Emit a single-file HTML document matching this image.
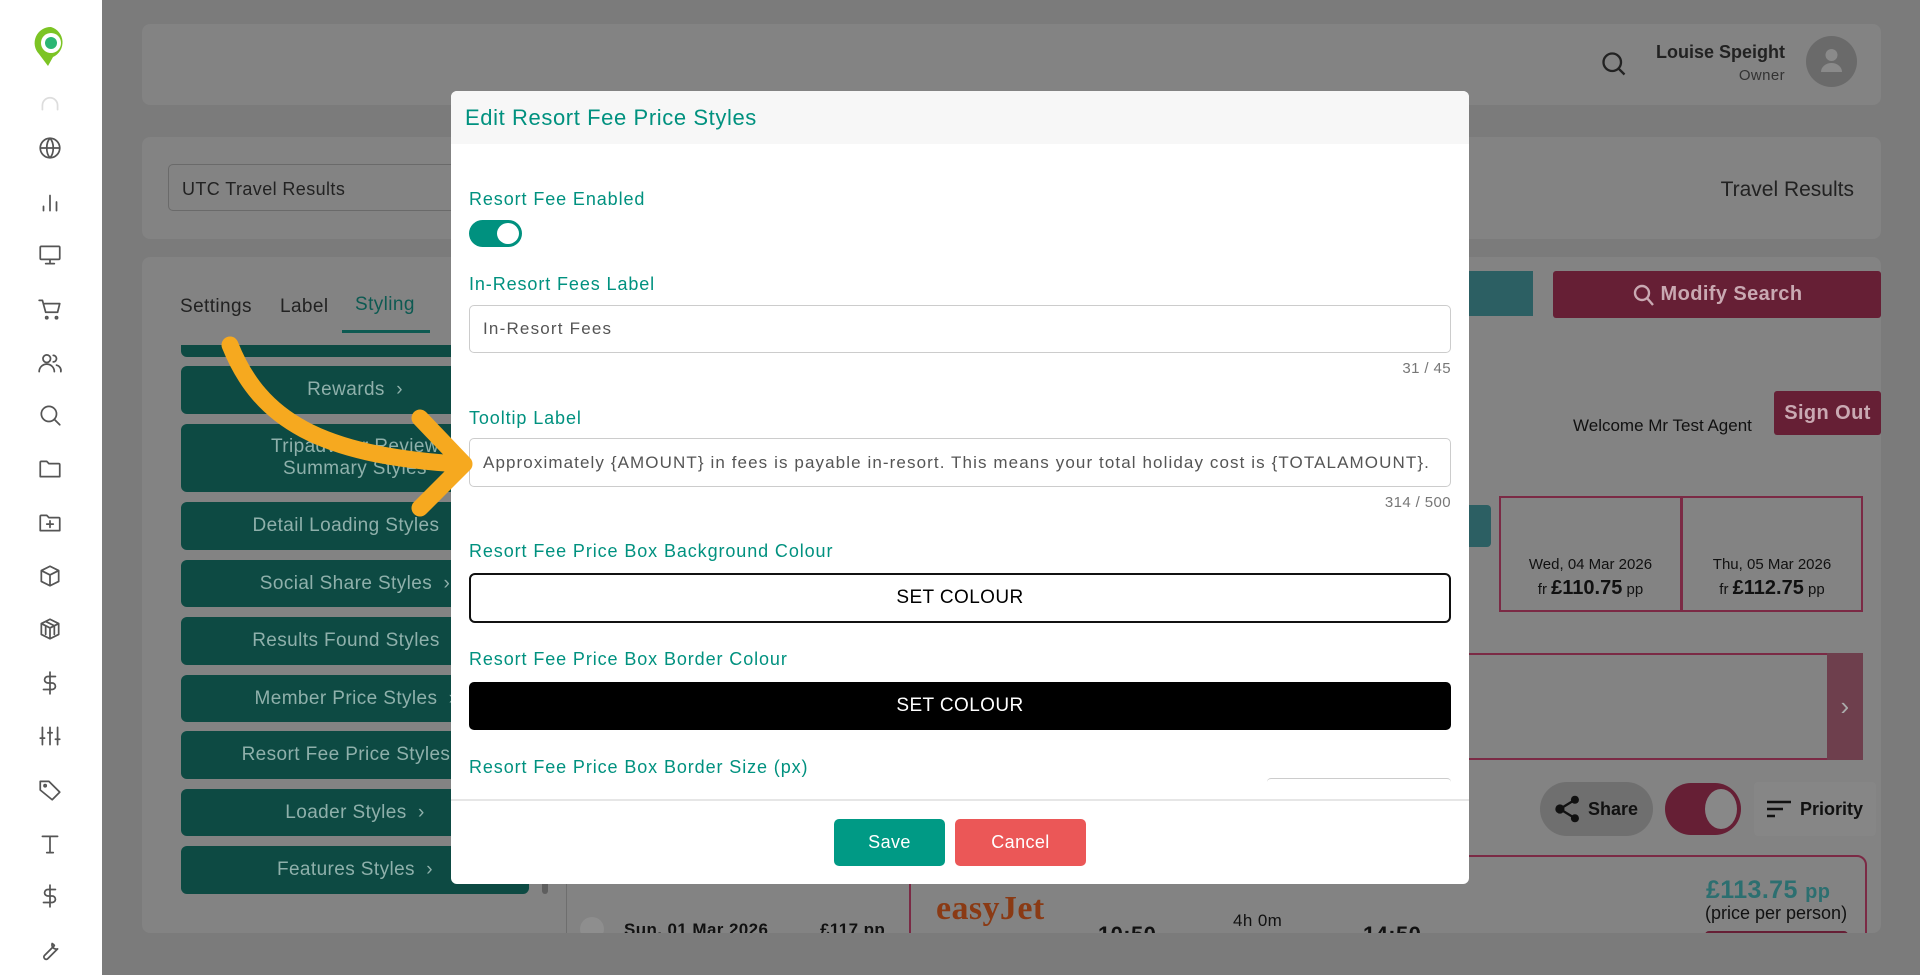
<!DOCTYPE html>
<html><head><meta charset="utf-8"><style>
*{box-sizing:border-box;margin:0;padding:0}
body{width:1920px;height:975px;overflow:hidden;background:#7b7b7b;font-family:"Liberation Sans",sans-serif;position:relative;letter-spacing:0.4px}
.a{position:absolute}
.side{left:0;top:0;width:102px;height:975px;background:#fff}
.card{background:#838383;border-radius:8px}
.tb{position:absolute;left:181px;width:348px;background:#0d4a43;border-radius:6px;color:#8fb0ab;font-size:19px;text-align:center;display:flex;align-items:center;justify-content:center;line-height:22px}
.lbl{position:absolute;left:469px;color:#00917f;font-size:18px;letter-spacing:0.9px}
.inp{position:absolute;left:469px;width:982px;border:1.5px solid #ccc;border-radius:5px;background:#fff;color:#555;font-size:17px;padding-left:13px;display:flex;align-items:center;white-space:nowrap;overflow:hidden;letter-spacing:1.2px}
.cnt{position:absolute;right:469px;color:#777;font-size:15px}
svg.i{position:absolute;left:37px;width:26px;height:26px;fill:none;stroke:#555;stroke-width:1.6;stroke-linecap:round;stroke-linejoin:round}
</style></head><body>
<div class="a side"></div>
<svg class="a" style="left:31px;top:24px" width="40" height="46" viewBox="0 0 40 46"><path d="M20 3a16 16 0 0 0-12 27l9 12 5-9a16 16 0 0 0-2-30z" fill="#7cc424"/><circle cx="20" cy="19" r="10" fill="#fff"/><circle cx="20" cy="19" r="6" fill="#2bb673"/></svg>
<svg class="i" style="top:88px;stroke:#ddd" viewBox="0 0 24 24"><path d="M5 20v-4a7 7 0 0 1 14 0v4"/></svg>
<svg class="i" style="top:135px" viewBox="0 0 24 24"><circle cx="12" cy="12" r="9"/><path d="M3 12h18M12 3c4 4 4 14 0 18M12 3c-4 4-4 14 0 18"/></svg>
<svg class="i" style="top:189px" viewBox="0 0 24 24"><path d="M6 20v-4M12 20V6M18 20v-8"/></svg>
<svg class="i" style="top:242px" viewBox="0 0 24 24"><rect x="3" y="4" width="18" height="12" rx="1"/><path d="M12 16v4M8 20h8"/></svg>
<svg class="i" style="top:296px" viewBox="0 0 24 24"><path d="M2 4h3l3 11h11l2-8H7"/><circle cx="9" cy="20" r="1"/><circle cx="18" cy="20" r="1"/></svg>
<svg class="i" style="top:350px" viewBox="0 0 24 24"><circle cx="9" cy="8" r="3.5"/><path d="M2 20a7 7 0 0 1 14 0M15 5a3 3 0 0 1 0 6M18 14a5 5 0 0 1 4 6"/></svg>
<svg class="i" style="top:402px" viewBox="0 0 24 24"><circle cx="11" cy="11" r="7"/><path d="M16 16l5 5"/></svg>
<svg class="i" style="top:456px" viewBox="0 0 24 24"><path d="M3 6a1 1 0 0 1 1-1h5l2 2h9a1 1 0 0 1 1 1v11H3z"/></svg>
<svg class="i" style="top:510px" viewBox="0 0 24 24"><path d="M3 6a1 1 0 0 1 1-1h5l2 2h9a1 1 0 0 1 1 1v11H3z"/><path d="M12 10v6M9 13h6"/></svg>
<svg class="i" style="top:563px" viewBox="0 0 24 24"><path d="M12 3l8 4v10l-8 4-8-4V7zM4 7l8 4 8-4M12 11v10"/></svg>
<svg class="i" style="top:616px" viewBox="0 0 24 24"><path d="M12 3l8 4v10l-8 4-8-4V7zM4 7l8 4 8-4M12 11v10M8 5l8 4M8 9v8M16 9v8"/></svg>
<svg class="i" style="top:670px" viewBox="0 0 24 24"><path d="M12 2v20M17 6H10a3 3 0 0 0 0 6h4a3 3 0 0 1 0 6H6"/></svg>
<svg class="i" style="top:723px" viewBox="0 0 24 24"><path d="M5 4v16M12 4v16M19 4v16M3 14h4M10 9h4M17 15h4"/></svg>
<svg class="i" style="top:777px" viewBox="0 0 24 24"><path d="M3 12V4h8l10 10-7 7z"/><circle cx="7.5" cy="8" r="1"/></svg>
<svg class="i" style="top:831px" viewBox="0 0 24 24"><path d="M5 5h14M12 5v15M9 20h6"/></svg>
<svg class="i" style="top:883px" viewBox="0 0 24 24"><path d="M12 2v20M17 6H10a3 3 0 0 0 0 6h4a3 3 0 0 1 0 6H6"/></svg>

<div class="a card" style="left:142px;top:24px;width:1739px;height:81px"></div>
<svg class="a" style="left:1600px;top:50px" width="28" height="28" viewBox="0 0 24 24" fill="none" stroke="#222" stroke-width="2"><circle cx="10.5" cy="10.5" r="7.5"/><path d="M16 16l5 5"/></svg>
<div class="a" style="right:135px;top:42px;font-size:18px;font-weight:bold;color:#222;letter-spacing:0">Louise Speight</div>
<div class="a" style="right:135px;top:67px;font-size:15px;color:#333">Owner</div>
<div class="a" style="left:1806px;top:36px;width:51px;height:51px;border-radius:50%;background:#6a6a6a"></div>
<svg class="a" style="left:1819px;top:48px" width="25" height="26" viewBox="0 0 25 26" fill="#8a8a8a"><circle cx="12.5" cy="7" r="6"/><path d="M2 24a10.5 9 0 0 1 21 0z"/></svg>

<div class="a card" style="left:142px;top:137px;width:1739px;height:102px"></div>
<div class="a" style="left:168px;top:164px;width:300px;height:47px;border:1px solid #6a6a6a;border-radius:5px;font-size:18px;color:#222;padding:14px 13px">UTC Travel Results</div>
<div class="a" style="right:66px;top:178px;font-size:21px;color:#222;letter-spacing:0">Travel Results</div>

<div class="a card" style="left:142px;top:257px;width:1739px;height:676px"></div>
<div class="a" style="left:180px;top:296px;font-size:19px;color:#222">Settings</div>
<div class="a" style="left:280px;top:296px;font-size:19px;color:#222">Label</div>
<div class="a" style="left:355px;top:294px;font-size:19px;color:#0d5a52">Styling</div>
<div class="a" style="left:342px;top:330px;width:88px;height:3px;background:#0d5a52"></div>
<div class="tb" style="top:345px;height:12px;border-radius:0 0 6px 6px"></div>
<div class="tb" style="top:366px;height:48px">Rewards &nbsp;›</div>
<div class="tb" style="top:424px;height:68px">Tripadvisor Review<br>Summary Styles</div>
<div class="tb" style="top:502px;height:48px">Detail Loading Styles &nbsp;›</div>
<div class="tb" style="top:560px;height:47px">Social Share Styles &nbsp;›</div>
<div class="tb" style="top:617px;height:48px">Results Found Styles &nbsp;›</div>
<div class="tb" style="top:675px;height:47px">Member Price Styles &nbsp;›</div>
<div class="tb" style="top:731px;height:48px">Resort Fee Price Styles &nbsp;›</div>
<div class="tb" style="top:789px;height:47px">Loader Styles &nbsp;›</div>
<div class="tb" style="top:846px;height:48px">Features Styles &nbsp;›</div>
<div class="a" style="left:542px;top:872px;width:6px;height:22px;background:#5e5e5e;border-radius:3px"></div>
<div class="a" style="left:566px;top:880px;width:1px;height:53px;background:#6e6e6e"></div>
<div class="a" style="left:580px;top:917px;width:24px;height:24px;border-radius:50%;background:#8e8e8e"></div>
<div class="a" style="left:624px;top:920px;font-size:17px;font-weight:bold;color:#111">Sun, 01 Mar 2026</div>
<div class="a" style="left:820px;top:920px;font-size:17px;font-weight:bold;color:#111">£117 pp</div>

<div class="a" style="left:1457px;top:271px;width:76px;height:45px;background:#2c5f63"></div>
<div class="a" style="left:1553px;top:271px;width:328px;height:47px;background:#661f35;border-radius:3px;color:#c9a9b2;font-size:20px;font-weight:bold;display:flex;align-items:center;justify-content:center">
<svg width="24" height="26" viewBox="0 0 24 24" fill="none" stroke="#c9a9b2" stroke-width="2.4" style="margin-right:5px"><circle cx="10" cy="10" r="7"/><path d="M15 15l6 7"/></svg>Modify Search</div>
<div class="a" style="left:1573px;top:416px;font-size:17px;color:#111;letter-spacing:0">Welcome Mr Test Agent</div>
<div class="a" style="left:1774px;top:391px;width:107px;height:44px;background:#661f35;border-radius:3px;color:#c9a9b2;font-size:20px;font-weight:bold;text-align:center;line-height:44px">Sign Out</div>
<div class="a" style="left:1469px;top:505px;width:22px;height:42px;background:#2c5f63;border-radius:0 4px 4px 0"></div>
<div class="a" style="left:1499px;top:496px;width:183px;height:116px;border:2px solid #7b2a45;text-align:center;font-size:15px;color:#111;padding-top:58px;letter-spacing:0">Wed, 04 Mar 2026<div style="margin-top:4px">fr <b style="font-size:20px">£110.75</b> pp</div></div>
<div class="a" style="left:1681px;top:496px;width:182px;height:116px;border:2px solid #7b2a45;text-align:center;font-size:15px;color:#111;padding-top:58px;letter-spacing:0">Thu, 05 Mar 2026<div style="margin-top:4px">fr <b style="font-size:20px">£112.75</b> pp</div></div>
<div class="a" style="left:1460px;top:653px;width:403px;height:107px;border:2px solid #7b2a45"></div>
<div class="a" style="left:1827px;top:653px;width:36px;height:107px;background:#6e3f4d;color:#aaa;font-size:26px;text-align:center;line-height:107px">›</div>
<div class="a" style="left:1540px;top:782px;width:113px;height:54px;border-radius:27px;background:#6f6f6f;color:#111;font-size:18px;font-weight:bold;display:flex;align-items:center;padding-left:14px;letter-spacing:0">
<svg width="28" height="30" viewBox="0 0 24 26" fill="#111" style="margin-right:6px"><circle cx="5" cy="13" r="4"/><circle cx="18" cy="5" r="3.5"/><circle cx="18" cy="21" r="3.5"/><path d="M5 13L18 5M5 13l13 8" stroke="#111" stroke-width="2"/></svg>Share</div>
<div class="a" style="left:1665px;top:783px;width:76px;height:52px;border-radius:26px;background:#661f35"></div>
<div class="a" style="left:1705px;top:789px;width:32px;height:40px;border-radius:50%;background:#888"></div>
<div class="a" style="left:1754px;top:782px;width:122px;height:54px;background:#868686;border-radius:4px;color:#111;font-size:18px;font-weight:bold;display:flex;align-items:center;padding-left:12px;letter-spacing:0">
<svg width="26" height="22" viewBox="0 0 26 22" stroke="#111" stroke-width="2.5" style="margin-right:8px"><path d="M1 4h24M1 11h16M1 18h8"/></svg>Priority</div>
<div class="a" style="left:909px;top:855px;width:958px;height:90px;border:2px solid #7b2a45;border-radius:10px"></div>
<div class="a" style="left:936px;top:890px;font-size:34px;font-weight:bold;color:#8a3a14;font-family:'Liberation Serif',serif">easyJet</div>
<div class="a" style="left:1098px;top:922px;font-size:22px;font-weight:bold;color:#111">10:50</div>
<div class="a" style="left:1233px;top:911px;font-size:17px;color:#111">4h 0m</div>
<div class="a" style="left:1363px;top:922px;font-size:22px;font-weight:bold;color:#111">14:50</div>
<div class="a" style="left:1706px;top:876px;font-size:25px;font-weight:bold;color:#2c6f70">£113.75 <span style="font-size:20px">pp</span></div>
<div class="a" style="left:1705px;top:903px;font-size:18px;color:#111;letter-spacing:0">(price per person)</div>
<div class="a" style="left:1705px;top:931px;width:143px;height:6px;background:#661f35;border-radius:4px 4px 0 0"></div>
<div class="a" style="left:0;top:933px;width:1920px;height:42px;background:#7b7b7b"></div>
<div class="a side" style="top:933px;height:42px"></div>
<svg class="i" style="top:937px" viewBox="0 0 24 24"><path d="M14 6a4 4 0 0 0 5 5l-9 9a2 2 0 0 1-3-3l9-9a4 4 0 0 0-2-2z"/></svg>

<div class="a" style="left:451px;top:91px;width:1018px;height:793px;background:#fff;border-radius:6px;overflow:hidden">
<div style="height:53px;background:#f7f7f7;color:#00917f;font-size:22px;padding:14px 0 0 14px;letter-spacing:0.6px">Edit Resort Fee Price Styles</div>
</div>
<div class="lbl" style="top:189px">Resort Fee Enabled</div>
<div class="a" style="left:469px;top:220px;width:53px;height:27px;border-radius:14px;background:#00917f"></div>
<div class="a" style="left:497px;top:223px;width:22px;height:21px;border-radius:50%;background:#fff"></div>
<div class="lbl" style="top:274px">In-Resort Fees Label</div>
<div class="inp" style="top:305px;height:48px">In-Resort Fees</div>
<div class="cnt" style="top:360px">31 / 45</div>
<div class="lbl" style="top:408px">Tooltip Label</div>
<div class="inp" style="top:438px;height:49px;letter-spacing:1.1px">Approximately {AMOUNT} in fees is payable in-resort. This means your total holiday cost is {TOTALAMOUNT}.</div>
<div class="cnt" style="top:494px">314 / 500</div>
<div class="lbl" style="top:541px">Resort Fee Price Box Background Colour</div>
<div class="a" style="left:469px;top:573px;width:982px;height:50px;border:2px solid #111;border-radius:6px;background:#fff;font-size:19px;color:#000;text-align:center;line-height:46px">SET COLOUR</div>
<div class="lbl" style="top:649px">Resort Fee Price Box Border Colour</div>
<div class="a" style="left:469px;top:682px;width:982px;height:48px;border-radius:5px;background:#000;font-size:19px;color:#fff;text-align:center;line-height:48px">SET COLOUR</div>
<div class="lbl" style="top:757px">Resort Fee Price Box Border Size (px)</div>
<div class="a" style="left:1267px;top:778px;width:184px;height:4px;border-top:1.5px solid #ccc;border-radius:5px 5px 0 0"></div>
<div class="a" style="left:451px;top:782px;width:1018px;height:18px;background:#fff"></div>
<div class="a" style="left:451px;top:799px;width:1018px;height:1.5px;background:#e6e6e6"></div>
<div class="a" style="left:834px;top:819px;width:111px;height:47px;border-radius:5px;background:#009a85;color:#fff;font-size:18px;text-align:center;line-height:47px">Save</div>
<div class="a" style="left:955px;top:819px;width:131px;height:47px;border-radius:5px;background:#eb5757;color:#fff;font-size:18px;text-align:center;line-height:47px">Cancel</div>

<svg class="a" style="left:0;top:0" width="1920" height="975" viewBox="0 0 1920 975" fill="none" stroke="#f6a91f" stroke-width="17" stroke-linecap="round" stroke-linejoin="round"><path d="M230 345C260 420 320 455 458 464"/><path d="M420 418L464 464L420 508"/></svg>
</body></html>
